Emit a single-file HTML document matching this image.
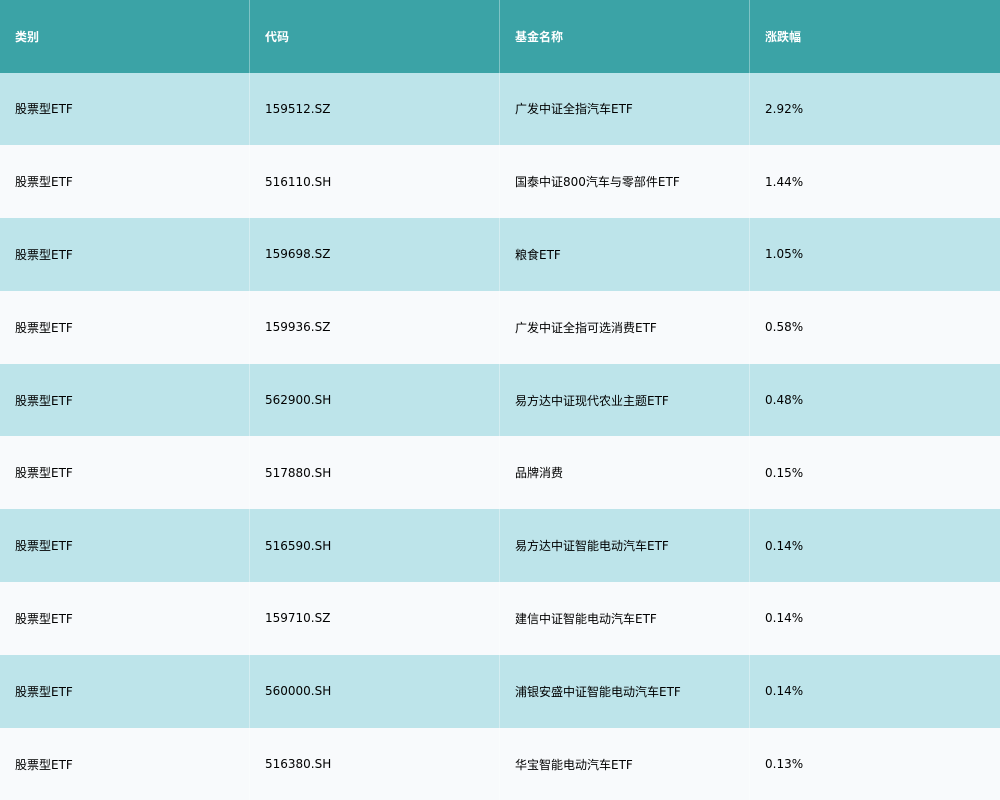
<!DOCTYPE html>
<html><head><meta charset="utf-8"><style>
*{margin:0;padding:0;box-sizing:border-box}
body{width:1000px;height:800px;overflow:hidden;background:#f8fafc;font-family:"DejaVu Sans","Noto Sans CJK SC",sans-serif;font-size:12px;color:#000;position:relative}
.r{position:absolute;left:0;width:1000px;height:72.8px}
.h{top:0;height:72.5px;background:#3ba3a6;color:#fff;font-weight:bold}
.o{background:#bde4ea}.e{background:#f8fafc}
.c{position:absolute;top:0;height:100%;width:250px;display:flex;align-items:center;padding-left:15px}
.c:nth-child(1){left:0}.c:nth-child(2){left:250px}.c:nth-child(3){left:500px}.c:nth-child(4){left:750px}
.v{position:absolute;top:0;width:1px;height:800px;background:rgba(255,255,255,0.35)}
</style></head><body>
<div class="r h" style="top:0"><div class="c">类别</div><div class="c">代码</div><div class="c">基金名称</div><div class="c">涨跌幅</div></div>
<div class="r o" style="top:72.5px"><div class="c">股票型ETF</div><div class="c">159512.SZ</div><div class="c">广发中证全指汽车ETF</div><div class="c">2.92%</div></div>
<div class="r e" style="top:145.3px"><div class="c">股票型ETF</div><div class="c">516110.SH</div><div class="c">国泰中证800汽车与零部件ETF</div><div class="c">1.44%</div></div>
<div class="r o" style="top:218.1px"><div class="c">股票型ETF</div><div class="c">159698.SZ</div><div class="c">粮食ETF</div><div class="c">1.05%</div></div>
<div class="r e" style="top:290.9px"><div class="c">股票型ETF</div><div class="c">159936.SZ</div><div class="c">广发中证全指可选消费ETF</div><div class="c">0.58%</div></div>
<div class="r o" style="top:363.7px"><div class="c">股票型ETF</div><div class="c">562900.SH</div><div class="c">易方达中证现代农业主题ETF</div><div class="c">0.48%</div></div>
<div class="r e" style="top:436.5px"><div class="c">股票型ETF</div><div class="c">517880.SH</div><div class="c">品牌消费</div><div class="c">0.15%</div></div>
<div class="r o" style="top:509.3px"><div class="c">股票型ETF</div><div class="c">516590.SH</div><div class="c">易方达中证智能电动汽车ETF</div><div class="c">0.14%</div></div>
<div class="r e" style="top:582.1px"><div class="c">股票型ETF</div><div class="c">159710.SZ</div><div class="c">建信中证智能电动汽车ETF</div><div class="c">0.14%</div></div>
<div class="r o" style="top:654.9px"><div class="c">股票型ETF</div><div class="c">560000.SH</div><div class="c">浦银安盛中证智能电动汽车ETF</div><div class="c">0.14%</div></div>
<div class="r e" style="top:727.7px"><div class="c">股票型ETF</div><div class="c">516380.SH</div><div class="c">华宝智能电动汽车ETF</div><div class="c">0.13%</div></div>
<div class="v" style="left:249px"></div><div class="v" style="left:499px"></div><div class="v" style="left:749px"></div>
</body></html>
